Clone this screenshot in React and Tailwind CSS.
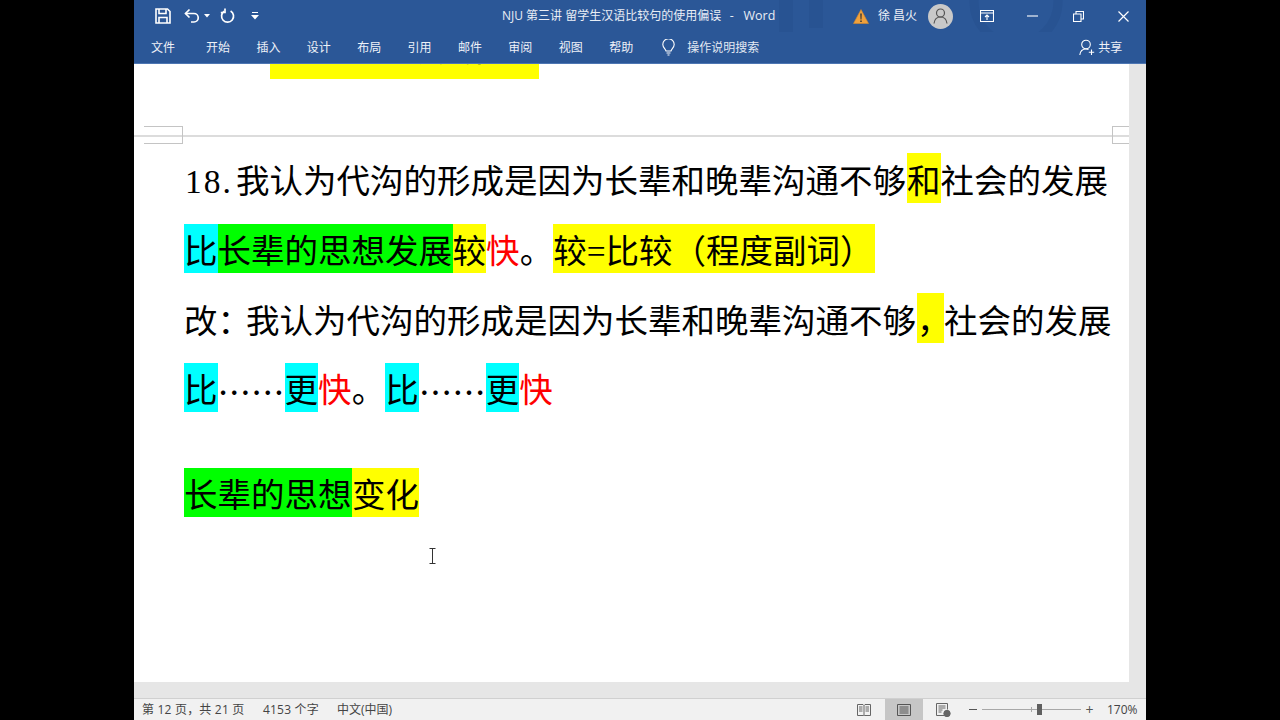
const UI = { fontFamily: '"Open Sans","Noto Sans CJK SC",sans-serif' };
const DOC = { fontFamily: '"Liberation Serif","Noto Sans CJK SC",serif' };
const CJK = { fontFamily: '"Noto Sans CJK SC",serif' };

function Ic({ w, h, vb, className = "", stroke = "#fff", sw = 1.4, children }) {
  return (
    <svg width={w} height={h} viewBox={vb || `0 0 ${w} ${h}`} fill="none" stroke={stroke} strokeWidth={sw} className={"shrink-0 " + className}>
      {children}
    </svg>
  );
}

function Run({ w, bg = "", color = "", children, style, className = "" }) {
  return (
    <span style={{ width: w, ...style }} className={`h-full pt-2 shrink-0 flex items-center whitespace-nowrap ${bg} ${color} ${className}`}>
      {children}
    </span>
  );
}

const CH = 33.55;

function TitleBar() {
  return (
    <div className="h-8 flex items-center relative text-white text-[12px]">
      <svg width="380" height="32" viewBox="0 0 380 32" fill="none" stroke="#285290" strokeWidth="9" className="absolute right-0 top-0 opacity-70">
        <circle cx="250" cy="2" r="42" />
        <path d="M20 0v32M50 0v28" strokeWidth="14" />
      </svg>
      <Ic w={16} h={16} className="relative ml-[21px]" sw={1.6}>
        <path d="M1 1h11.5L15 3.5V15H1z" />
        <path d="M4 1v4.5h7V1M4 15V9.5h8V15" />
      </Ic>
      <Ic w={16} h={16} className="relative ml-[13px]" sw={1.7}>
        <path d="M5.5 1.5 1.5 5.5l4 4" />
        <path d="M1.5 5.5H10a4.2 4.2 0 0 1 0 8.5H7" />
      </Ic>
      <svg width="6" height="4" viewBox="0 0 6 4" fill="#fff" className="relative ml-[4px]"><path d="M0 0h6L3 3.5z" /></svg>
      <Ic w={15} h={16} className="relative ml-[10px]" sw={1.7}>
        <path d="M4.2 3.2a6 6 0 1 0 6.4-.2" />
        <path d="M5 0.5v4H0.8" />
      </Ic>
      <svg width="8" height="8" viewBox="0 0 8 8" fill="#fff" className="relative ml-[16px]"><path d="M1 0h6v1H1zM0 3h8L4 7.5z" /></svg>
      <div className="relative ml-[243px] w-[351px] whitespace-pre text-[#e8edf5]" style={UI}>
        <span className="text-[12px]">NJU 第三讲 留学生汉语比较句的使用偏误</span>
        <span className="text-[12.5px] ml-[2px]">  -   Word</span>
      </div>
      <svg width="16" height="15" viewBox="0 0 16 15" className="relative shrink-0">
        <path d="M8 0.5 15.5 14.5H.5z" fill="#f0a13c" stroke="#d98a2a" strokeWidth=".6" />
        <path d="M7.2 4.5h1.6l-.3 6h-1zM7.2 11.500h1.600V13H7.200z" fill="#3b3b3b" />
      </svg>
      <span className="relative ml-[9px] w-[40px] whitespace-pre text-[12px] text-[#eef1f7]" lang="zh-CN" style={UI}>徐 昌火</span>
      <div className="relative ml-[10px] w-[25px] h-[25px] rounded-full bg-[#c9c9c9] flex items-center justify-center">
        <Ic w={15} h={16} stroke="#555" sw={1.2}>
          <circle cx="7.5" cy="5" r="4" />
          <path d="M1 15.5c.5-4 3-6.500 6.500-6.500s6 2.500 6.500 6.500" />
        </Ic>
      </div>
      <Ic w={14} h={12} className="relative ml-[27px]" sw={1.1}>
        <path d="M.5.5h13v11H.5zM.5 3h13M7 10V5M5 7l2-2 2 2" />
      </Ic>
      <Ic w={11} h={2} className="relative ml-[33px]" sw={1.1}><path d="M0 1h11" /></Ic>
      <Ic w={11} h={11} className="relative ml-[35px]" sw={1.1}>
        <path d="M.5 3h7.500v7.500H.5zM3 3V.5h7.500V8H8" />
      </Ic>
      <Ic w={11} h={11} className="relative ml-[34px]" sw={1.2}><path d="M.5.5l10 10M10.500.5l-10 10" /></Ic>
    </div>
  );
}

function TabBar() {
  const tabs = ["开始", "插入", "设计", "布局", "引用", "邮件", "审阅", "视图", "帮助"];
  return (
    <div className="h-8 flex items-center text-white text-[12px] border-b border-[#4d76b3]" style={UI} lang="zh-CN">
      <span className="ml-[17px] w-6 text-[#eef1f7]">文件</span>
      <div className="ml-[31px] flex gap-[26.4px] text-[#eef1f7]">
        {tabs.map((t) => <span key={t} className="w-6 whitespace-nowrap">{t}</span>)}
      </div>
      <Ic w={13} h={17} className="ml-[29px]" sw={1.1}>
        <path d="M4 12C3.500 10 .8 8.500.8 5.500a5.700 5.700 0 0 1 11.400 0C12.200 8.500 9.500 10 9 12z" />
        <path d="M4.500 14h4M5.500 16h2" />
      </Ic>
      <span className="ml-[12px] w-[72px] whitespace-nowrap text-[#e3e9f3]">操作说明搜索</span>
      <Ic w={16} h={17} className="ml-[320px]" sw={1.1}>
        <circle cx="7" cy="5.500" r="4.300" />
        <path d="M.8 16c.4-3.500 2.500-6 6.200-6 1 0 1.800.2 2.500.5M12.500 10.500v5.500M9.800 13.300h5.400" />
      </Ic>
      <span className="ml-[3px] w-6 whitespace-nowrap text-[#eef1f7]">共享</span>
    </div>
  );
}

function Document() {
  return (
    <div className="flex-1 relative bg-white overflow-hidden flex flex-col" style={DOC} lang="zh-CN">
      <div className="ml-[136px] w-[269px] h-[15px] bg-[#ffff00] overflow-hidden relative shrink-0">
        <div className="absolute bottom-[9px] left-0 text-[33.5px] leading-[40px] whitespace-nowrap text-black">不同的一致变化</div>
      </div>

      <div className="mt-[47px] h-[18px] relative shrink-0">
        <div className="absolute left-0 right-0 top-[9px] h-[2px] bg-[#dcdcdc]" />
        <div className="absolute left-[10px] top-0 w-[39px] h-[18px] border border-l-0 border-[#c4c4c4]" />
        <div className="absolute right-0 top-0 w-[17px] h-[18px] border border-r-0 border-[#c4c4c4]" />
      </div>

      <div className="pl-[50px] text-[33.5px] text-black flex flex-col">
        <div className="mt-[9px] h-[50px] flex">
          <Run w={51} style={{ marginLeft: 1 }} className="tracking-[2px]">18.</Run>
          <Run w={CH * 20}>我认为代沟的形成是因为长辈和晚辈沟通不够</Run>
          <Run w={CH} bg="bg-[#ffff00]">和</Run>
          <Run w={CH * 5}>社会的发展</Run>
        </div>
        <div className="mt-[21px] h-[49px] flex">
          <Run w={CH} bg="bg-[#00ffff]">比</Run>
          <Run w={235} bg="bg-[#00ff00]">长辈的思想发展</Run>
          <Run w={CH} bg="bg-[#ffff00]">较</Run>
          <Run w={CH} color="text-[#ff0000]">快</Run>
          <Run w={CH}>。</Run>
          <Run w={322} bg="bg-[#ffff00]">较=比较（程度副词）</Run>
        </div>
        <div className="mt-[20px] h-[50px] flex">
          <Run w={62}>改：</Run>
          <Run w={CH * 20}>我认为代沟的形成是因为长辈和晚辈沟通不够</Run>
          <Run w={27} bg="bg-[#ffff00]">，</Run>
          <Run w={CH * 5}>社会的发展</Run>
        </div>
        <div className="mt-[20px] h-[49px] flex">
          <Run w={CH} bg="bg-[#00ffff]">比</Run>
          <Run w={67} style={CJK}>……</Run>
          <Run w={CH} bg="bg-[#00ffff]">更</Run>
          <Run w={CH} color="text-[#ff0000]">快</Run>
          <Run w={CH}>。</Run>
          <Run w={CH} bg="bg-[#00ffff]">比</Run>
          <Run w={67} style={CJK}>……</Run>
          <Run w={CH} bg="bg-[#00ffff]">更</Run>
          <Run w={CH} color="text-[#ff0000]">快</Run>
        </div>
        <div className="mt-[56px] h-[49px] flex">
          <Run w={168} bg="bg-[#00ff00]">长辈的思想</Run>
          <Run w={67} bg="bg-[#ffff00]">变化</Run>
        </div>
      </div>

      <Ic w={7} h={16} stroke="#333" sw={1} className="absolute left-[295px] top-[484px]">
        <path d="M.5.5h6M.5 15.500h6M3.500.5v15" />
      </Ic>
    </div>
  );
}

function StatusBar() {
  return (
    <div className="h-[22px] flex items-center bg-[#f1f1f1] border-t border-[#d0d0d0] text-[12px] text-[#444]" style={UI} lang="zh-CN">
      <span className="ml-2 w-[103px] whitespace-pre tracking-[.2px]">第 12 页，共 21 页</span>
      <span className="ml-[18px] w-[56px] whitespace-pre tracking-[.2px]">4153 个字</span>
      <span className="ml-[18px] w-[56px] whitespace-pre">中文(中国)</span>
      <Ic w={14} h={12} stroke="#666" sw={1} className="ml-[464px]">
        <path d="M.5.5h5.500L7 1.500 8 .5h5.500v11H8l-1 .5-1-.5H.5zM7 1.500v10M2 3h3.500M2 5h3.500M2 7h3.500M8.500 3h3.500M8.500 5h3.500M8.500 7h3.500" />
      </Ic>
      <div className="ml-[14px] w-[38px] h-full bg-[#c6c6c6] flex items-center justify-center">
        <Ic w={14} h={12} stroke="#555" sw={1}>
          <path d="M.5.5h13v11H.5zM2.500 3h9M2.500 5h9M2.500 7h9M2.500 9h9" />
        </Ic>
      </div>
      <Ic w={15} h={14} stroke="#666" sw={1} className="ml-[13px]">
        <path d="M8 12.500H.5V.5h11v6M2.500 3h7M2.500 5h7M2.500 7h4M2.500 9h3" />
        <circle cx="11" cy="10.500" r="3.200" fill="#666" />
      </Ic>
      <span className="ml-[18px] w-[8px] h-px bg-[#555]" />
      <div className="ml-[5px] w-[99px] h-px bg-[#a8a8a8] relative">
        <span className="absolute left-[49px] -top-[2px] w-px h-[5px] bg-[#a8a8a8]" />
        <span className="absolute left-[55px] -top-[5px] w-[5px] h-[11px] bg-[#606060]" />
      </div>
      <span className="ml-[4px] w-[9px] text-center leading-none text-[14px] text-[#555]">+</span>
      <span className="ml-[13px] whitespace-nowrap text-[12px]">170%</span>
    </div>
  );
}

export default function App() {
  return (
    <div className="w-[1280px] h-[720px] bg-black flex justify-center overflow-hidden">
      <div className="w-[1012px] h-full flex flex-col bg-[#e6e6e6]">
        <div className="bg-[#2b5797] shrink-0" lang="zh-CN" style={UI}>
          <TitleBar />
          <TabBar />
        </div>
        <div className="flex-1 flex flex-col min-h-0">
          <div className="flex-1 flex min-h-0">
            <Document />
            <div className="w-[17px] bg-[#e6e6e6] shrink-0" />
          </div>
          <div className="h-4 bg-[#e6e6e6] shrink-0" />
        </div>
        <StatusBar />
      </div>
    </div>
  );
}
